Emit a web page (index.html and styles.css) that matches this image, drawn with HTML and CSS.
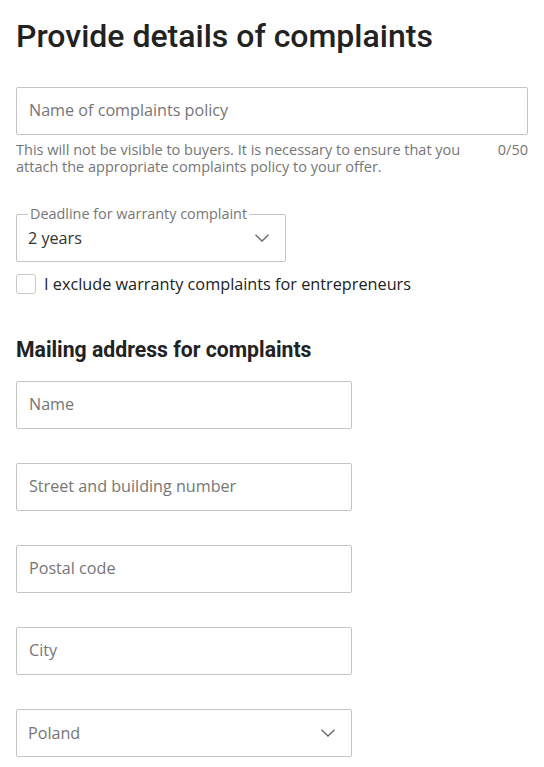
FILE: index.html
```html
<!DOCTYPE html>
<html>
<head>
<meta charset="utf-8">
<link rel="stylesheet" href="styles.css">
</head>
<body>
<main class="page">
  <h1 class="title">Provide details of complaints</h1>

  <div class="field field-wide">
    <div class="input"><span class="placeholder">Name of complaints policy</span></div>
    <div class="help">
      <p class="help-text">This will not be visible to buyers. It is necessary to ensure that you attach the appropriate complaints policy to your offer.</p>
      <span class="counter">0/50</span>
    </div>
  </div>

  <div class="select select-short">
    <span class="floating">Deadline for warranty complaint</span>
    <span class="value">2 years</span>
    <svg class="chevron" width="14" height="8" viewBox="0 0 14 8"><path d="M0.5 0.8 L7 7 L13.5 0.8" fill="none" stroke="#666" stroke-width="1.3"/></svg>
  </div>

  <label class="check">
    <span class="box"></span>
    <span class="check-label">I exclude warranty complaints for entrepreneurs</span>
  </label>

  <h2 class="subtitle">Mailing address for complaints</h2>

  <div class="address">
    <div class="input input-mid"><span class="placeholder">Name</span></div>
    <div class="input input-mid"><span class="placeholder">Street and building number</span></div>
    <div class="input input-mid"><span class="placeholder">Postal code</span></div>
    <div class="input input-mid"><span class="placeholder">City</span></div>
    <div class="select input-mid">
      <span class="value muted">Poland</span>
      <svg class="chevron" width="14" height="8" viewBox="0 0 14 8"><path d="M0.5 0.8 L7 7 L13.5 0.8" fill="none" stroke="#666" stroke-width="1.3"/></svg>
    </div>
  </div>
</main>
</body>
</html>
```
FILE: styles.css
```css
* { box-sizing: border-box; }
html, body { margin: 0; padding: 0; background: #fff; }
body { font-family: "Open Sans", "Liberation Sans", sans-serif; color: #222; }
.page { padding: 16px 16px 0 16px; display: flex; flex-direction: column; }
.title {
  font-family: Roboto, "Liberation Sans", sans-serif;
  font-weight: 500; font-size: 32px; line-height: 40px;
  margin: 0; color: #222;
}
.field-wide { margin-top: 31px; }
.input {
  height: 48px; border: 1px solid #c4c4c4; border-radius: 2px;
  display: flex; align-items: center; padding: 0 12px 2px 12px;
}
.placeholder { font-size: 16.15px; color: #767676; }
.help { display: flex; justify-content: space-between; gap: 24px; margin-top: 6px; }
.help-text { margin: 0; font-size: 14.5px; line-height: 17px; color: #767676; max-width: 470px; }
.counter { font-size: 14.5px; line-height: 17px; color: #767676; }
.select {
  position: relative; height: 48px; border: 1px solid #c4c4c4; border-radius: 2px;
  display: flex; align-items: center; justify-content: space-between; padding: 0 16px 0 11px;
}
.select-short { width: 270px; margin-top: 39px; }
.floating {
  position: absolute; top: -10px; left: 11px; padding: 0 2px; background: #fff;
  font-size: 14.4px; line-height: 18px; color: #767676;
}
.value { font-size: 16.15px; color: #333; }
.value.muted { color: #767676; }
.chevron { display: block; }
.check { display: flex; align-items: center; gap: 8px; margin-top: 10px; }
.box { width: 20px; height: 20px; border: 1px solid #c8c8c8; border-radius: 3px; flex: none; }
.check-label { font-size: 16.25px; line-height: 24px; color: #222; }
.subtitle {
  font-family: Roboto, "Liberation Sans", sans-serif;
  font-weight: 700; font-size: 21.2px; line-height: 24px; margin: 42px 0 0 0; color: #222;
}
.address { display: flex; flex-direction: column; gap: 34px; margin-top: 19px; }
.input-mid { width: 336px; }
```
